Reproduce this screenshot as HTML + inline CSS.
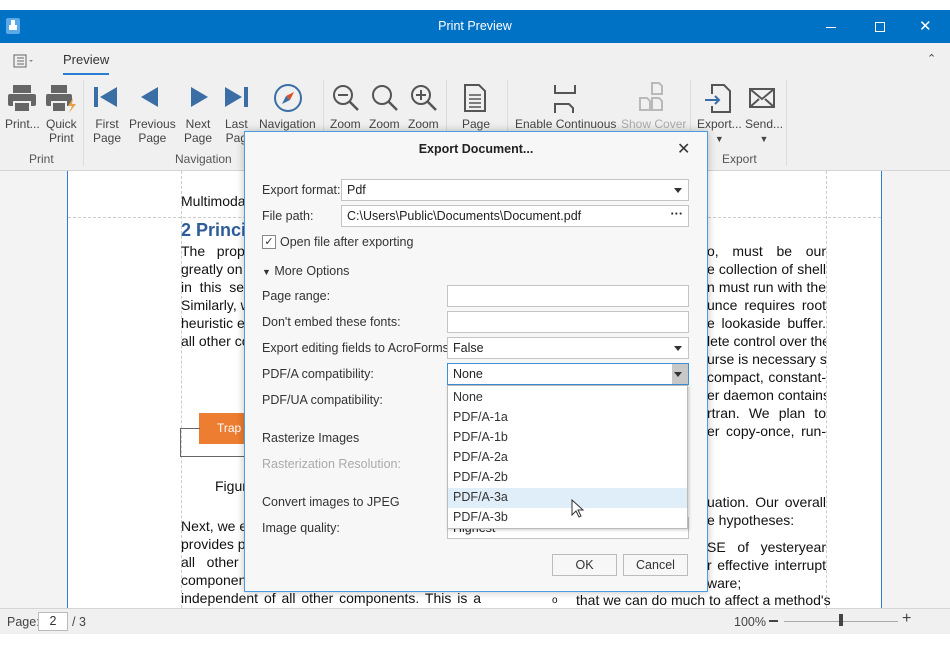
<!DOCTYPE html>
<html><head><meta charset="utf-8"><style>
*{box-sizing:border-box;margin:0;padding:0}
body{width:950px;height:645px;background:#fff;font-family:"Liberation Sans",sans-serif;position:relative;overflow:hidden;font-size:12px;color:#333}
.abs{position:absolute}
.tb{left:0;top:10px;width:950px;height:33px;background:#0072c6;color:#fff}
.rib{left:0;top:43px;width:950px;height:128px;background:#f0f0f0;border-bottom:1px solid #d4d4d4}
.btn{position:absolute;text-align:center;font-size:12px;color:#444;line-height:14px;white-space:nowrap}
.sep{position:absolute;top:80px;width:1px;height:86px;background:#dcdcdc}
.glab{position:absolute;top:152px;font-size:12px;color:#555}
.doc{left:0;top:171px;width:950px;height:437px;background:#f3f3f3}
.page{left:67px;top:171px;width:815px;height:437px;background:#fff;border-left:1px solid #2b7cd3;border-right:1px solid #2b7cd3}
.t{position:absolute;font-size:14px;color:#111;line-height:18px;white-space:nowrap}
.r{position:absolute;left:707px;width:119px;font-size:14px;color:#111;line-height:18px;height:18px;white-space:nowrap;text-align:justify;text-align-last:justify;overflow:hidden}
.status{left:0;top:608px;width:950px;height:26px;background:#f0f0f0;border-top:1px solid #d4d4d4}
.dlg{left:244px;top:131px;width:464px;height:461px;background:#f7f7f7;border:1px solid #4d9be0;box-shadow:0 0 8px rgba(0,0,0,.25)}
.lab{position:absolute;left:17px;font-size:12.5px;color:#333}
.inp{position:absolute;background:#fff;border:1px solid #c4c4c4;height:22px;font-size:12.5px;padding:3px 5px;color:#222}
.arr{position:absolute;right:6px;top:8px;width:0;height:0;border-left:4px solid transparent;border-right:4px solid transparent;border-top:5px solid #333}
.it{height:20px;padding:2px 5px;font-size:12.5px}
</style></head><body>
<div class="abs tb">
 <svg class="abs" style="left:6px;top:8px" width="14" height="16"><rect x="0" y="0" width="14" height="16" rx="2" fill="#5aa9e8"/><rect x="3" y="7" width="8" height="5" fill="#fff"/><rect x="5" y="2" width="4" height="5" fill="#fff"/></svg>
 <div class="abs" style="left:0;width:950px;top:9px;text-align:center;font-size:12.5px">Print Preview</div>
 <div class="abs" style="left:826px;top:17px;width:10px;height:1px;background:#fff"></div>
 <div class="abs" style="left:875px;top:12px;width:10px;height:10px;border:1px solid #fff"></div>
 <div class="abs" style="left:919px;top:7px;font-size:15px">✕</div>
</div>
<div class="abs rib">
 <svg class="abs" style="left:13px;top:11px" width="22" height="14"><rect x="1" y="1" width="12" height="12" fill="none" stroke="#666"/><path d="M4 4h7M4 7h7M4 10h7" stroke="#666"/><path d="M16 6l2 2 2-2z" fill="#888"/></svg>
 <div class="abs" style="left:63px;top:9px;font-size:13px;color:#333">Preview</div>
 <div class="abs" style="left:63px;top:30px;width:46px;height:2px;background:#2b7cd3"></div>
 <div class="abs" style="left:927px;top:9px;font-size:11px;color:#444">⌃</div>
</div>
<svg class="abs" style="left:7px;top:84px" width="30" height="30"><rect x="6" y="1" width="18" height="8" fill="#666"/><rect x="1" y="10" width="28" height="12" rx="2" fill="#666"/><rect x="7" y="18" width="16" height="10" fill="#666" stroke="#f0f0f0" stroke-width="2"/></svg>
<div class="btn" style="left:5px;top:117px">Print...</div>
<svg class="abs" style="left:45px;top:84px" width="34" height="30"><rect x="6" y="1" width="16" height="8" fill="#666"/><rect x="1" y="10" width="26" height="12" rx="2" fill="#666"/><rect x="7" y="18" width="14" height="10" fill="#666" stroke="#f0f0f0" stroke-width="2"/><path d="M28 14l-5 8h4l-3 7 7-9h-4z" fill="#e8a045"/></svg>
<div class="btn" style="left:46px;top:117px">Quick<br>Print</div>
<div class="sep" style="left:83px"></div>
<div class="glab" style="left:29px">Print</div>
<svg class="abs" style="left:93px;top:86px" width="26" height="22"><rect x="1" y="1" width="4" height="20" fill="#3a6ea5"/><path d="M24 1v20L7 11z" fill="#3a6ea5"/></svg>
<div class="btn" style="left:93px;top:117px">First<br>Page</div>
<svg class="abs" style="left:140px;top:86px" width="20" height="22"><path d="M18 1v20L1 11z" fill="#3a6ea5"/></svg>
<div class="btn" style="left:129px;top:117px">Previous<br>Page</div>
<svg class="abs" style="left:190px;top:86px" width="20" height="22"><path d="M1 1v20l17-10z" fill="#3a6ea5"/></svg>
<div class="btn" style="left:184px;top:117px">Next<br>Page</div>
<svg class="abs" style="left:224px;top:86px" width="26" height="22"><path d="M1 1v20l17-10z" fill="#3a6ea5"/><rect x="20" y="1" width="4" height="20" fill="#3a6ea5"/></svg>
<div class="btn" style="left:225px;top:117px">Last<br>Pag</div>
<svg class="abs" style="left:273px;top:83px" width="30" height="30"><circle cx="15" cy="15" r="13" fill="none" stroke="#3a6ea5" stroke-width="2"/><path d="M21 9l-8 4 4 4z" fill="#d9512c"/><path d="M9 21l4-8 4 4z" fill="#3a6ea5"/></svg>
<div class="btn" style="left:259px;top:117px">Navigation</div>
<div class="glab" style="left:175px">Navigation</div>
<div class="sep" style="left:323px"></div>
<svg class="abs" style="left:332px;top:84px" width="28" height="28"><circle cx="11" cy="11" r="9" fill="none" stroke="#555" stroke-width="2"/><path d="M17 17l9 9" stroke="#555" stroke-width="2.5"/><path d="M6 11h10" stroke="#555" stroke-width="2"/></svg>
<div class="btn" style="left:330px;top:117px">Zoom</div>
<svg class="abs" style="left:371px;top:84px" width="28" height="28"><circle cx="11" cy="11" r="9" fill="none" stroke="#555" stroke-width="2"/><path d="M17 17l9 9" stroke="#555" stroke-width="2.5"/></svg>
<div class="btn" style="left:369px;top:117px">Zoom</div>
<svg class="abs" style="left:410px;top:84px" width="28" height="28"><circle cx="11" cy="11" r="9" fill="none" stroke="#555" stroke-width="2"/><path d="M17 17l9 9" stroke="#555" stroke-width="2.5"/><path d="M6 11h10M11 6v10" stroke="#555" stroke-width="2"/></svg>
<div class="btn" style="left:408px;top:117px">Zoom</div>
<div class="sep" style="left:446px"></div>
<svg class="abs" style="left:463px;top:84px" width="24" height="28"><path d="M2 1h14l6 6v20H2z" fill="none" stroke="#555" stroke-width="2"/><path d="M6 11h12M6 15h12M6 19h12M6 23h12" stroke="#555" stroke-width="1.5"/></svg>
<div class="btn" style="left:462px;top:117px">Page</div>
<div class="sep" style="left:507px"></div>
<svg class="abs" style="left:553px;top:84px" width="24" height="30"><path d="M2 1v8h20V1M2 29v-9h14l4 4v5" fill="none" stroke="#555" stroke-width="2"/></svg>
<div class="btn" style="left:515px;top:117px">Enable Continuous</div>
<svg class="abs" style="left:638px;top:82px" width="28" height="30" opacity=".35"><path d="M14 1h7l3 3v8H14z M2 16h7l3 3v9H2z M14 16h7l3 3v9H14z" fill="none" stroke="#555" stroke-width="2"/></svg>
<div class="btn" style="left:621px;top:117px;color:#aaa">Show Cover</div>
<div class="sep" style="left:690px"></div>
<svg class="abs" style="left:704px;top:84px" width="28" height="30"><path d="M8 10V1h12l6 6v21H8v-6" fill="none" stroke="#555" stroke-width="2"/><path d="M1 16h14M11 12l4 4-4 4" fill="none" stroke="#3a6ea5" stroke-width="2"/></svg>
<div class="btn" style="left:697px;top:117px">Export...<br><span style="font-size:9px">▼</span></div>
<svg class="abs" style="left:749px;top:88px" width="26" height="20"><rect x="1" y="1" width="24" height="18" fill="none" stroke="#555" stroke-width="2"/><path d="M1 1l12 10 12-10M1 19l9-8M25 19l-9-8" fill="none" stroke="#555" stroke-width="2"/></svg>
<div class="btn" style="left:745px;top:117px">Send...<br><span style="font-size:9px">▼</span></div>
<div class="glab" style="left:722px">Export</div>
<div class="sep" style="left:786px"></div>

<div class="abs doc"></div>
<div class="abs page"></div>
<div class="abs" style="left:181px;top:171px;height:437px;border-left:1px dashed #ccc"></div>
<div class="abs" style="left:826px;top:171px;height:437px;border-left:1px dashed #ccc"></div>
<div class="abs" style="left:68px;top:217px;width:813px;border-top:1px dashed #ccc"></div>
<div class="t" style="left:181px;top:192px">Multimodal</div>
<div class="t" style="left:181px;top:221px;font-size:18px;font-weight:bold;color:#2e5c9a">2 Principles</div>
<div class="t" style="left:181px;top:242px;line-height:18px">The&nbsp;&nbsp; prop<br>greatly on<br>in&nbsp; this&nbsp; sec<br>Similarly, w<br>heuristic e<br>all other co</div>
<div class="abs" style="left:199px;top:413px;width:60px;height:31px;background:#ed7d31;color:#fff;font-size:12px;padding:8px 0 0 18px">Trap</div>
<div class="abs" style="left:180px;top:428px;width:20px;height:29px;border:1px solid #666;border-right:none"></div>
<div class="abs" style="left:180px;top:456px;width:70px;border-top:1px solid #666"></div>
<div class="t" style="left:215px;top:477px">Figure</div>
<div class="t" style="left:181px;top:517px">Next, we e<br>provides p<br>all&nbsp;&nbsp; other<br>componen</div>
<div class="t" style="left:181px;top:589px;width:300px;text-align:justify;text-align-last:justify">independent of all other components. This is a</div>
<div class="r" style="top:242px">o, must be our</div>
<div class="r" style="top:260px">e collection of shell</div>
<div class="r" style="top:278px">n must run with the</div>
<div class="r" style="top:296px">unce requires root</div>
<div class="r" style="top:314px">e lookaside buffer.</div>
<div class="r" style="top:332px">lete control over the</div>
<div class="r" style="top:350px">urse is necessary so</div>
<div class="r" style="top:368px">compact, constant-</div>
<div class="r" style="top:386px">er daemon contains</div>
<div class="r" style="top:404px">rtran. We plan to</div>
<div class="r" style="top:422px">er copy-once, run-</div>
<div class="r" style="top:493px">uation. Our overall</div>
<div class="t" style="left:707px;top:511px">e hypotheses:</div>
<div class="r" style="top:538px">SE of yesteryear</div>
<div class="r" style="top:556px">r effective interrupt</div>
<div class="t" style="left:707px;top:574px">ware;</div>
<div class="t" style="left:552px;top:592px;font-size:10px">o</div>
<div class="t" style="left:576px;top:591px;width:250px;text-align:justify;text-align-last:justify">that we can do much to affect a method's</div>

<div class="abs status">
 <div class="abs" style="left:7px;top:6px;font-size:12.5px;color:#444">Page:</div>
 <div class="abs" style="left:38px;top:3px;width:30px;height:19px;background:#fff;border:1px solid #bbb;text-align:center;font-size:12.5px;padding-top:1px">2</div>
 <div class="abs" style="left:72px;top:6px;font-size:12.5px;color:#444">/ 3</div>
 <div class="abs" style="left:734px;top:6px;font-size:12.5px;color:#444">100%</div>
 <div class="abs" style="left:769px;top:11px;width:9px;height:2px;background:#444"></div>
 <div class="abs" style="left:784px;top:12px;width:114px;height:1px;background:#aaa"></div>
 <div class="abs" style="left:839px;top:5px;width:4px;height:12px;background:#444"></div>
 <div class="abs" style="left:902px;top:1px;font-size:16px;color:#444">+</div>
</div>

<div class="abs dlg">
 <div class="abs" style="left:0;width:462px;top:10px;text-align:center;font-weight:bold;font-size:12.5px;color:#222">Export Document...</div>
 <div class="abs" style="left:432px;top:7px;font-size:16px;color:#333">✕</div>
 <div class="lab" style="top:51px">Export format:</div>
 <div class="inp" style="left:96px;top:47px;width:348px">Pdf<div class="arr"></div></div>
 <div class="lab" style="top:77px">File path:</div>
 <div class="inp" style="left:96px;top:73px;width:348px">C:\Users\Public\Documents\Document.pdf<span style="position:absolute;right:5px;top:1px;font-weight:bold">···</span></div>
 <div class="abs" style="left:17px;top:103px;width:14px;height:14px;border:1px solid #888;background:#fff;font-size:11px;line-height:12px;text-align:center">✓</div>
 <div class="lab" style="left:35px;top:103px">Open file after exporting</div>
 <div class="lab" style="top:132px"><span style="font-size:9px">▼</span> More Options</div>
 <div class="lab" style="top:157px">Page range:</div>
 <div class="inp" style="left:202px;top:153px;width:242px"></div>
 <div class="lab" style="top:183px">Don't embed these fonts:</div>
 <div class="inp" style="left:202px;top:179px;width:242px"></div>
 <div class="lab" style="top:209px">Export editing fields to AcroForms</div>
 <div class="inp" style="left:202px;top:205px;width:242px">False<div class="arr"></div></div>
 <div class="lab" style="top:235px">PDF/A compatibility:</div>
 <div class="inp" style="left:202px;top:231px;width:242px;border-color:#3c8fd8">None<div class="abs" style="right:0;top:0;width:16px;height:20px;background:#c8c8c8"></div><div class="arr"></div></div>
 <div class="lab" style="top:261px">PDF/UA compatibility:</div>
 <div class="lab" style="top:299px">Rasterize Images</div>
 <div class="lab" style="top:325px;color:#aaa">Rasterization Resolution:</div>
 <div class="lab" style="top:363px">Convert images to JPEG</div>
 <div class="lab" style="top:389px">Image quality:</div>
 <div class="inp" style="left:202px;top:385px;width:242px">Highest</div>
 <div class="abs" style="left:202px;top:253px;width:241px;height:144px;background:#fff;border:1px solid #bbb;box-shadow:1px 1px 3px rgba(0,0,0,.2);padding-top:2px">
  <div class="it">None</div><div class="it">PDF/A-1a</div><div class="it">PDF/A-1b</div><div class="it">PDF/A-2a</div><div class="it">PDF/A-2b</div><div class="it" style="background:#e0eefa">PDF/A-3a</div><div class="it">PDF/A-3b</div>
 </div>
 <svg class="abs" style="left:326px;top:367px" width="14" height="20"><path d="M1 1v15l4-4 3 6 2-1-3-6h5z" fill="#fff" stroke="#333"/></svg>
 <div class="abs" style="left:307px;top:422px;width:65px;height:22px;border:1px solid #bbb;background:#f7f7f7;text-align:center;font-size:12.5px;padding-top:3px">OK</div>
 <div class="abs" style="left:378px;top:422px;width:65px;height:22px;border:1px solid #bbb;background:#f7f7f7;text-align:center;font-size:12.5px;padding-top:3px">Cancel</div>
</div>
</body></html>
